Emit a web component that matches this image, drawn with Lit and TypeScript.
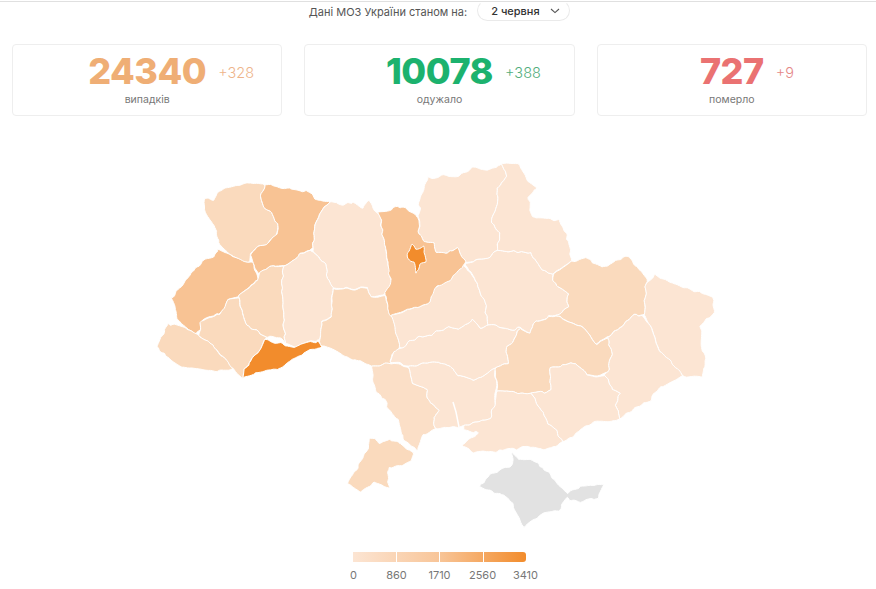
import { LitElement, html, css, svg } from "lit";
import { customElement } from "lit/decorators.js";

const C0 = "#fce5d3", C1 = "#fbdfc7", C2 = "#fadabd", C3 = "#f8c394", C4 = "#f28c2c";

const regions: [string, string][] = [
  [C2, "203,199 213,200 225,187 250,183 265,185 261,198 263,208 273,213 278,225 275,238 267,242 256,245 248,252 249,260 240,260 230,253 217,238 215,230 207,215"],
  [C3, "265,184 277,187 290,190 310,193 313,198 327,202 318,215 313,232 313,247 302,253 285,264 273,263 258,272 252,263 251,255 257,247 270,243 278,235 278,225 273,213 263,208 262,198"],
  [C0, "328,203 335,202 343,205 353,202 362,207 370,200 378,217 380,225 385,252 392,272 390,282 383,293 370,297 367,283 350,287 333,288 327,278 325,265 315,252 313,232 320,215"],
  [C3, "218,248 232,258 250,262 257,278 237,298 228,300 223,310 202,318 200,330 195,335 178,320 175,310 173,298 190,273 205,260 215,257"],
  [C2, "258,272 273,265 283,265 282,298 283,342 278,338 267,337 247,325 237,298 257,282"],
  [C0, "283,265 297,255 312,250 325,265 327,278 333,288 330,298 333,317 322,320 320,340 307,340 293,345 285,343 282,298"],
  [C2, "228,300 237,300 247,325 265,337 257,352 243,367 242,378 232,368 220,352 200,335 200,320 223,313"],
  [C2, "168,322 175,325 183,330 198,337 215,348 230,362 232,370 218,372 197,368 182,367 167,357 157,345 163,337"],
  [C2, "322,322 333,318 332,290 367,287 370,297 383,295 390,312 400,345 392,355 392,363 370,367 350,358 330,348 322,345"],
  [C1, "370,367 390,363 408,367 413,383 427,390 430,402 440,410 433,418 437,430 423,435 417,450 400,435 398,420 387,408 385,400 375,390"],
  [C2, "368,440 373,438 377,442 388,440 402,443 412,453 410,460 392,468 388,467 390,488 375,483 360,492 347,483 355,472 368,450"],
  [C0, "408,365 437,360 455,368 458,377 477,380 495,368 495,403 490,418 463,425 458,427 447,428 437,430 433,418 440,410 430,402 427,390 413,383"],
  [C0, "393,350 403,347 417,337 430,335 450,327 460,330 473,320 480,327 488,325 510,330 520,330 508,345 507,362 495,368 477,380 458,377 455,368 437,360 408,365 392,362"],
  [C0, "390,318 417,308 430,302 435,288 440,283 450,280 463,265 477,285 485,302 488,325 480,327 473,320 460,330 450,327 430,335 417,337 403,347 400,345"],
  [C0, "465,262 480,258 490,257 497,250 518,253 530,252 542,270 552,272 552,280 568,293 567,307 555,312 537,320 530,332 520,328 510,330 488,325 485,302 477,285"],
  [C0, "418,232 418,205 428,177 460,177 473,167 490,168 503,163 508,175 497,188 498,205 492,222 500,232 498,245 497,250 490,257 480,258 465,262 458,248 447,253 437,252 435,242 425,240"],
  [C3, "380,212 393,207 407,207 415,217 418,232 425,240 435,242 437,252 447,253 458,248 465,262 462,270 450,280 437,283 435,295 430,302 417,307 397,312 390,318 388,302 383,290 392,280 390,265 385,245 382,222"],
  [C0, "503,163 517,163 525,178 535,188 528,197 532,217 557,220 567,235 572,260 553,267 552,272 542,270 530,252 518,253 497,250 500,232 492,222 498,205 497,188 508,175"],
  [C2, "552,272 577,262 585,257 603,267 628,258 647,280 643,312 633,315 610,335 597,343 585,327 555,315 567,307 568,293 552,280"],
  [C0, "655,275 683,287 713,298 713,312 702,325 700,342 707,358 702,375 682,375 663,355 653,328 645,312 648,282"],
  [C0, "643,315 650,325 660,352 680,372 680,377 657,390 650,400 630,410 620,418 615,405 620,393 613,390 603,375 607,372 613,355 608,338 633,315"],
  [C2, "537,320 555,315 585,327 597,345 608,338 613,355 607,372 588,375 577,365 550,365 550,390 530,393 497,390 495,368 507,362 508,345 520,330 530,332"],
  [C0, "550,365 577,365 588,375 603,375 613,390 620,393 615,405 620,418 593,423 575,433 563,442 547,420 530,393 550,390"],
  [C0, "497,390 530,393 547,420 563,442 557,447 543,450 533,447 517,450 500,450 473,453 463,445 480,433 463,430 463,425 490,418 495,403"],
  [C4, "265,340 277,343 292,347 307,343 320,342 321,348 305,352 293,358 278,370 260,372 247,377 245,381 243,368 257,353"],
  [C4, "407,253 412,245 417,250 425,245 425,262 420,265 418,275 415,263 408,258"],
  ["#e2e2e2", "513,453 518,460 530,460 543,468 557,483 568,493 580,485 603,485 598,498 580,502 567,497 557,510 537,517 523,527 517,517 513,503 500,493 480,487 490,473 513,463"],
];

type Pt = [number, number];
const hash = (i: number, j: number) => {
  const s = Math.sin(i * 127.1 + j * 311.7) * 43758.5453;
  return s - Math.floor(s);
};
const noise = (x: number, y: number, k: number) => {
  const i = Math.floor(x), j = Math.floor(y), u = x - i, v = y - j;
  const h = (a: number, b: number) => hash(a + k, b - k) - 0.5;
  return (h(i, j) * (1 - u) + h(i + 1, j) * u) * (1 - v) + (h(i, j + 1) * (1 - u) + h(i + 1, j + 1) * u) * v;
};
/* A position-only wobble keeps shared borders together while roughening them. */
const wobble = ([x, y]: Pt): Pt => [
  x + 3.2 * noise(x / 4.5, y / 4.5, 11) + 3.5 * noise(x / 13, y / 13, 23),
  y + 3.2 * noise(x / 4.5, y / 4.5, 37) + 3.5 * noise(x / 13, y / 13, 51),
];

function buildPaths(): { fill: string; d: string }[] {
  const polys: Pt[][] = regions.map(([, p]) => p.split(" ").map((s) => s.split(",").map(Number) as Pt));
  const cityIdx = polys.length - 2;
  // snap each vertex onto close edges of the neighbouring regions
  for (let pass = 0; pass < 2; pass++) {
    polys.forEach((poly, a) => {
      if (a >= cityIdx) return;
      poly.forEach((pt, idx) => {
        let best = 4.5, target: Pt | null = null;
        polys.forEach((other, b) => {
          if (b === a || b >= cityIdx) return;
          other.forEach((p1, k) => {
            const p2 = other[(k + 1) % other.length];
            const dx = p2[0] - p1[0], dy = p2[1] - p1[1];
            const t = Math.max(0, Math.min(1, ((pt[0] - p1[0]) * dx + (pt[1] - p1[1]) * dy) / (dx * dx + dy * dy || 1)));
            const q: Pt = [p1[0] + t * dx, p1[1] + t * dy];
            const dist = Math.hypot(q[0] - pt[0], q[1] - pt[1]);
            if (dist < best && dist > 0) { best = dist; target = q; }
          });
        });
        if (target) poly[idx] = [(pt[0] + (target as Pt)[0]) / 2, (pt[1] + (target as Pt)[1]) / 2];
      });
    });
  }
  return polys.map((poly, n) => {
    const out: Pt[] = [];
    poly.forEach((p1, k) => {
      const p2 = poly[(k + 1) % poly.length];
      const steps = Math.max(1, Math.round(Math.hypot(p2[0] - p1[0], p2[1] - p1[1]) / 1.8));
      for (let s = 0; s < steps; s++) {
        out.push(wobble([p1[0] + ((p2[0] - p1[0]) * s) / steps, p1[1] + ((p2[1] - p1[1]) * s) / steps]));
      }
    });
    return { fill: regions[n][0], d: "M" + out.map((p) => p[0].toFixed(1) + " " + p[1].toFixed(1)).join("L") + "Z" };
  });
}
const paths = buildPaths();

const stats = [
  { n: "24340", d: "+328", l: "випадків", c: "cases" },
  { n: "10078", d: "+388", l: "одужало", c: "healed" },
  { n: "727", d: "+9", l: "померло", c: "dead" },
];

@customElement("app-root")
export class AppRoot extends LitElement {
  static styles = css`
    :host {
      display: block;
      height: 589px;
      overflow: hidden;
      background: #fff;
      font-family: Inter, "Noto Sans", sans-serif;
      color: #555;
    }
    .line { height: 1px; margin-top: 1px; background: #e0e0e0; }
    .filter {
      display: flex;
      justify-content: center;
      align-items: center;
      gap: 10px;
      height: 19px;
      font-size: 11px;
      color: #555;
      padding-left: 3px;
    }
    .pill {
      display: flex;
      align-items: center;
      justify-content: space-between;
      box-sizing: border-box;
      width: 93px;
      height: 21px;
      margin-top: -2px;
      padding: 0 9px 0 13px;
      border: 1px solid #eaeaea;
      border-top-color: transparent;
      border-radius: 11px;
      color: #333;
      font-weight: 500;
    }
    .cards {
      display: flex;
      gap: 22px;
      padding: 23px 9px 0 12px;
    }
    .card {
      flex: 1;
      height: 72px;
      box-sizing: border-box;
      border: 1px solid #eeeeee;
      border-radius: 4px;
      display: flex;
      flex-direction: column;
      align-items: center;
      padding-top: 5px;
    }
    .num {
      position: relative;
      font-size: 36px;
      line-height: 43px;
      font-weight: 800;
      letter-spacing: -0.5px;
    }
    .delta {
      position: absolute;
      left: 100%;
      top: 14px;
      margin-left: 12px;
      font-size: 14.5px;
      line-height: 18px;
      font-weight: 300;
      letter-spacing: 0;
      white-space: nowrap;
    }
    .label { font-size: 10.5px; line-height: 13px; color: #777; }
    .cases .num { color: #efae75; }
    .cases .delta { color: #eeb48a; }
    .healed .num { color: #1cb26e; }
    .healed .delta { color: #52ad7c; }
    .dead .num { color: #ea7272; }
    .dead .delta { color: #e58888; }
    svg.map { display: block; width: 876px; height: 422px; margin-top: 14px; }
    .legend { display: flex; flex-direction: column; align-items: center; padding-left: 3px; }
    .bar {
      display: flex;
      width: 173px;
      height: 10px;
      border-radius: 0 3px 3px 0;
      background: linear-gradient(to right, #fce5d3, #f8c598 50%, #f28c2c);
      overflow: hidden;
    }
    .bar i { flex: 1; border-left: 1px solid #fff; }
    .bar i:first-child { border-left: 0; }
    .ticks { display: flex; margin-top: 6px; }
    .ticks span {
      width: 43px;
      text-align: center;
      font-size: 11px;
      line-height: 15px;
      color: #777;
    }
  `;

  render() {
    return html`
      <div class="line"></div>
      <div class="filter">
        <span>Дані МОЗ України станом на:</span>
        <div class="pill">
          <span>2 червня</span>
          <svg width="10" height="6" viewBox="0 0 10 6"><path d="M1 1l4 3.6L9 1" fill="none" stroke="#555" stroke-width="1.1"/></svg>
        </div>
      </div>
      <div class="cards">
        ${stats.map(
          (s) => html`<div class="card ${s.c}">
            <div class="num">${s.n}<span class="delta">${s.d}</span></div>
            <div class="label">${s.l}</div>
          </div>`
        )}
      </div>
      <svg class="map" viewBox="0 130 876 422">
        ${paths.map((p) => svg`<path d=${p.d} fill=${p.fill} stroke="#fff" stroke-width="1" stroke-linejoin="round"></path>`)}
        <path d="M453 402L456 412L459 427" fill="none" stroke="#fff" stroke-width="1.5"></path>
      </svg>
      <div class="legend">
        <div class="bar"><i></i><i></i><i></i><i></i></div>
        <div class="ticks">
          ${["0", "860", "1710", "2560", "3410"].map((t) => html`<span>${t}</span>`)}
        </div>
      </div>
    `;
  }
}
